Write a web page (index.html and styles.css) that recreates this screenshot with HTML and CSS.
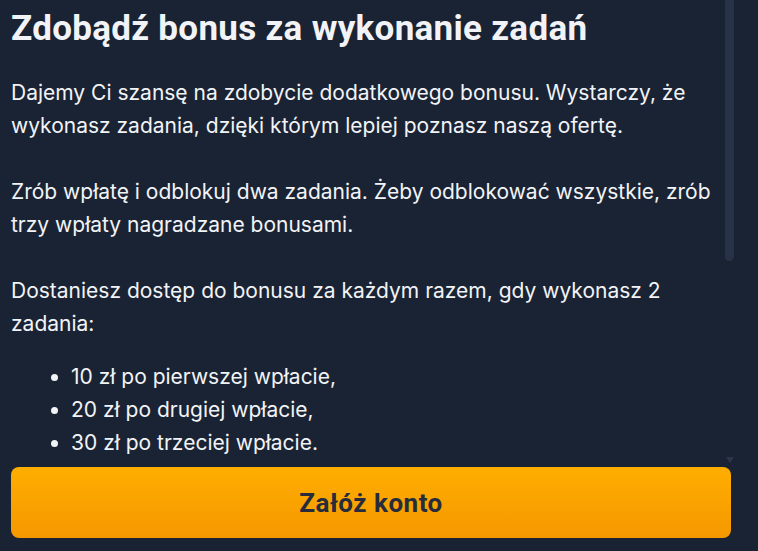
FILE: index.html
```html
<!DOCTYPE html>
<html lang="pl">
<head>
<meta charset="utf-8">
<link rel="stylesheet" href="styles.css">
</head>
<body>
<div class="page">
  <div class="scroll-area">
    <div class="content">
      <h1 class="title">Zdobądź bonus za wykonanie zadań</h1>
      <p class="para">Dajemy Ci szansę na zdobycie dodatkowego bonusu. Wystarczy, że wykonasz zadania, dzięki którym lepiej poznasz naszą ofertę.</p>
      <p class="para">Zrób wpłatę i odblokuj dwa zadania. Żeby odblokować wszystkie, zrób trzy wpłaty nagradzane bonusami.</p>
      <p class="para para-last">Dostaniesz dostęp do bonusu za każdym razem, gdy wykonasz 2 zadania:</p>
      <ul class="list">
        <li>10 zł po pierwszej wpłacie,</li>
        <li>20 zł po drugiej wpłacie,</li>
        <li>30 zł po trzeciej wpłacie.</li>
      </ul>
    </div>
    <div class="scrollbar">
      <div class="thumb"></div>
      <div class="arrow"></div>
    </div>
  </div>
  <div class="actions">
    <button class="cta">Załóż konto</button>
  </div>
</div>
</body>
</html>
```

FILE: styles.css
```css
html, body {
  margin: 0;
  padding: 0;
  background: #1a2334;
}
.page {
  width: 758px;
  height: 551px;
  display: flex;
  flex-direction: column;
  overflow: hidden;
}
.scroll-area {
  display: flex;
  height: 463px;
  padding-left: 11px;
  overflow: hidden;
}
.content {
  width: 714px;
  flex: none;
  color: #f2f3f6;
  font-family: Inter, "Noto Sans", sans-serif;
  font-size: 21px;
  line-height: 33px;
}
.title {
  margin: 9px 0 27px;
  font-family: Roboto, "Noto Sans", sans-serif;
  font-weight: 700;
  font-size: 35px;
  line-height: 40px;
  color: #f2f3f7;
  letter-spacing: 0.3px;
}
.para {
  margin: 0 0 33px;
}
.para-last {
  margin-bottom: 20px;
}
.list {
  margin: 0;
  padding-left: 60px;
}
.scrollbar {
  width: 9px;
  flex: none;
  display: flex;
  flex-direction: column;
  justify-content: space-between;
}
.thumb {
  height: 261px;
  background: #283246;
  border-radius: 0 0 5px 5px;
}
.arrow {
  width: 0;
  height: 0;
  margin: 0 auto;
  border-left: 4.5px solid transparent;
  border-right: 4.5px solid transparent;
  border-top: 6px solid #2c3649;
}
.actions {
  padding: 4px 0 0 11px;
}
.cta {
  width: 720px;
  height: 71px;
  border: 0;
  border-radius: 8px;
  background: linear-gradient(180deg, #ffae00 0%, #f59800 100%);
  color: #262c3c;
  font-family: Roboto, "Noto Sans", sans-serif;
  font-weight: 700;
  font-size: 26px;
  letter-spacing: 0.5px;
  cursor: pointer;
}
```
